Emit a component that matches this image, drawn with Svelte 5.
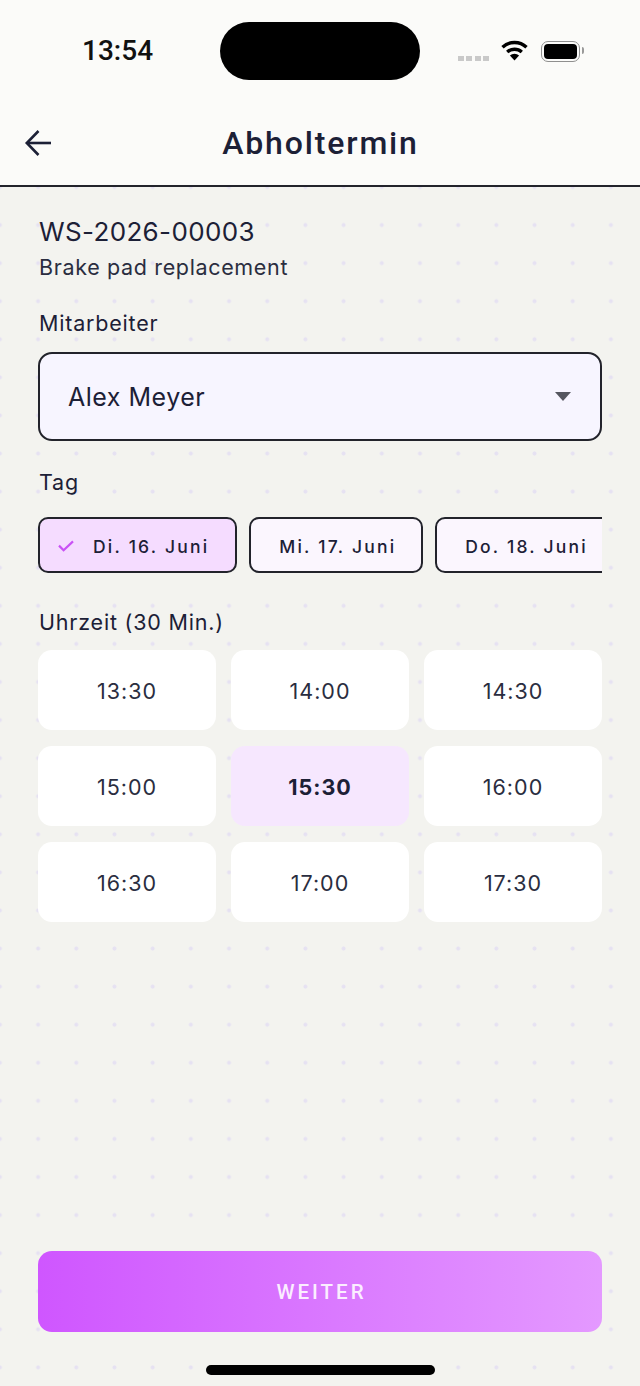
<script>
    const days = [
        { label: 'Di. 16. Juni', active: true },
        { label: 'Mi. 17. Juni' },
        { label: 'Do. 18. Juni' }
    ];

    const times = ['13:30', '14:00', '14:30', '15:00', '15:30', '16:00', '16:30', '17:00', '17:30'];
    let selectedTime = $state('15:30');
</script>

<div class="screen">
    <header class="top">
        <div class="status-bar">
            <span class="clock">13:54</span>
            <div class="island"></div>
            <div class="status-icons">
                <div class="signal"><i></i><i></i><i></i><i></i></div>
                <svg class="wifi" width="27" height="21" viewBox="0 0 27 21" aria-hidden="true">
                    <path d="M1.5 7.2 A17.5 17.5 0 0 1 25.5 7.2" fill="none" stroke="#000" stroke-width="3.4"/>
                    <path d="M6.2 12 A11 11 0 0 1 20.8 12" fill="none" stroke="#000" stroke-width="3.4"/>
                    <path d="M13.5 20.5 L8.9 15.6 A6.6 6.6 0 0 1 18.1 15.6 Z" fill="#000"/>
                </svg>
                <div class="battery"><div class="battery-fill"></div></div>
            </div>
        </div>
        <div class="title-row">
            <button class="back" aria-label="Zurück">
                <svg width="28" height="28" viewBox="0 0 28 28" fill="none" stroke="#1c2036" stroke-width="2.6">
                    <path d="M27 14H3"/>
                    <path d="M14.5 2 2.8 14 14.5 26"/>
                </svg>
            </button>
            <h1>Abholtermin</h1>
        </div>
    </header>

    <main class="content">
        <div class="order-no">WS-2026-00003</div>
        <div class="order-desc">Brake pad replacement</div>

        <div class="label first">Mitarbeiter</div>
        <div class="select">
            <span>Alex Meyer</span>
            <div class="caret"></div>
        </div>

        <div class="label day-label">Tag</div>
        <div class="chips">
            {#each days as day}
                <div class="chip" class:active={day.active}>
                    {#if day.active}
                        <svg width="16" height="12" viewBox="0 0 16 12" fill="none" stroke="#c952f5" stroke-width="2.2">
                            <path d="M1 5.6 5.6 10.2 15 1.4"/>
                        </svg>
                    {/if}
                    <span>{day.label}</span>
                </div>
            {/each}
        </div>

        <div class="label time-label">Uhrzeit (30 Min.)</div>
        <div class="times">
            {#each times as time}
                <button class="time" class:selected={selectedTime === time} onclick={() => selectedTime = time}>{time}</button>
            {/each}
        </div>

        <button class="next">WEITER</button>
    </main>

    <div class="home-indicator"></div>
</div>

<style>
    :global(body) {
        margin: 0;
        background: #f3f3ef;
    }

    .screen {
        position: relative;
        width: 640px;
        height: 1386px;
        display: flex;
        flex-direction: column;
        overflow: hidden;
        font-family: Inter, "Liberation Sans", sans-serif;
        color: #1c2036;
    }

    .top {
        height: 187px;
        box-sizing: border-box;
        flex: none;
        background: #fbfbf9;
        border-bottom: 2.5px solid #22232b;
    }

    .status-bar {
        position: relative;
        height: 100px;
        display: flex;
        justify-content: space-between;
        align-items: flex-start;
        padding: 0 60px 0 82px;
    }

    .clock {
        margin-top: 35px;
        font-family: Roboto, sans-serif;
        font-size: 28px;
        line-height: 32px;
        font-weight: 500;
        color: #111;
    }

    .island {
        position: absolute;
        left: 220px;
        top: 22px;
        width: 200px;
        height: 58px;
        border-radius: 29px;
        background: #000;
    }

    .status-icons {
        display: flex;
        align-items: center;
        margin-top: 41px;
    }

    .signal {
        display: flex;
        gap: 2.3px;
        margin-top: 14px;
        margin-right: 12px;
    }

    .signal i {
        width: 6px;
        height: 5.5px;
        background: #c9c9c9;
    }

    .wifi {
        margin-right: 13px;
        margin-top: -2px;
    }

    .battery {
        position: relative;
        box-sizing: border-box;
        width: 39px;
        height: 21px;
        padding: 2px;
        border: 1.5px solid #8f8f8f;
        border-radius: 7px;
    }

    .battery::after {
        content: '';
        position: absolute;
        right: -5px;
        top: 5px;
        width: 2px;
        height: 7px;
        border-radius: 0 2px 2px 0;
        background: #999;
    }

    .battery-fill {
        height: 100%;
        border-radius: 4px;
        background: #000;
    }

    .title-row {
        position: relative;
        display: flex;
        justify-content: center;
        align-items: center;
        height: 85px;
    }

    .back {
        position: absolute;
        left: 24px;
        top: 29px;
        padding: 0;
        border: none;
        background: none;
        line-height: 0;
    }

    h1 {
        margin: 0;
        padding-left: 1px;
        font-family: Roboto, sans-serif;
        font-size: 32px;
        font-weight: 500;
        letter-spacing: 1.85px;
        color: #1c2036;
    }

    .content {
        flex: 1;
        display: flex;
        flex-direction: column;
        padding: 0 38px;
        background-color: #f3f3ef;
        background-image: radial-gradient(circle, rgba(196, 180, 250, 0.28) 1.6px, transparent 2.4px);
        background-size: 38.2px 38.08px;
        background-position: 19px 19px;
    }

    .order-no {
        margin-top: 27px;
        padding-left: 1px;
        font-size: 26px;
        line-height: 36px;
        letter-spacing: 0.35px;
    }

    .order-desc {
        margin-top: 2px;
        padding-left: 1px;
        font-size: 21.5px;
        line-height: 30px;
        letter-spacing: 0.65px;
        color: #2a2d40;
    }

    .label {
        padding-left: 1px;
        font-size: 21.5px;
        line-height: 30px;
        letter-spacing: 0.8px;
    }

    .first {
        margin-top: 26px;
    }

    .select {
        box-sizing: border-box;
        height: 89px;
        margin-top: 14px;
        padding: 0 29px 0 28px;
        display: flex;
        justify-content: space-between;
        align-items: center;
        background: #f7f5ff;
        border: 2.5px solid #22232b;
        border-radius: 14px;
        font-size: 25px;
        letter-spacing: 0.5px;
    }

    .caret {
        width: 0;
        height: 0;
        border-left: 8px solid transparent;
        border-right: 8px solid transparent;
        border-top: 9px solid #55565f;
    }

    .day-label {
        margin-top: 26px;
    }

    .chips {
        display: flex;
        gap: 12px;
        margin-top: 20px;
        overflow: hidden;
    }

    .chip {
        box-sizing: border-box;
        height: 56px;
        flex: none;
        padding: 2px 25px 0 28px;
        display: flex;
        align-items: center;
        gap: 19px;
        font-size: 17.5px;
        font-weight: 500;
        letter-spacing: 2.2px;
        background: #fbf6fe;
        border: 2.5px solid #22232b;
        border-radius: 10px;
        white-space: nowrap;
    }

    .chip.active {
        padding-left: 18px;
        padding-right: 26px;
        background: #f5dcff;
    }

    .time-label {
        margin-top: 34px;
    }

    .times {
        display: grid;
        grid-template-columns: repeat(3, 1fr);
        gap: 16px 15px;
        margin-top: 13px;
    }

    .time {
        height: 80px;
        padding: 1px 0 0;
        border: none;
        border-radius: 14px;
        background: #fff;
        font-family: inherit;
        font-size: 21.5px;
        letter-spacing: 1px;
        color: #2a2d40;
    }

    .time.selected {
        background: #f6e7fe;
        font-weight: 700;
        color: #1c2036;
    }

    .next {
        height: 81px;
        margin-top: auto;
        margin-bottom: 54px;
        padding: 0 0 0 3px;
        border: none;
        border-radius: 14px;
        background: linear-gradient(90deg, #cf56ff, #e499ff);
        font-family: Roboto, sans-serif;
        font-size: 20.5px;
        font-weight: 500;
        letter-spacing: 3px;
        color: #fbeeff;
    }

    .home-indicator {
        position: absolute;
        left: 206px;
        bottom: 11px;
        width: 229px;
        height: 10px;
        border-radius: 5px;
        background: #000;
    }
</style>
